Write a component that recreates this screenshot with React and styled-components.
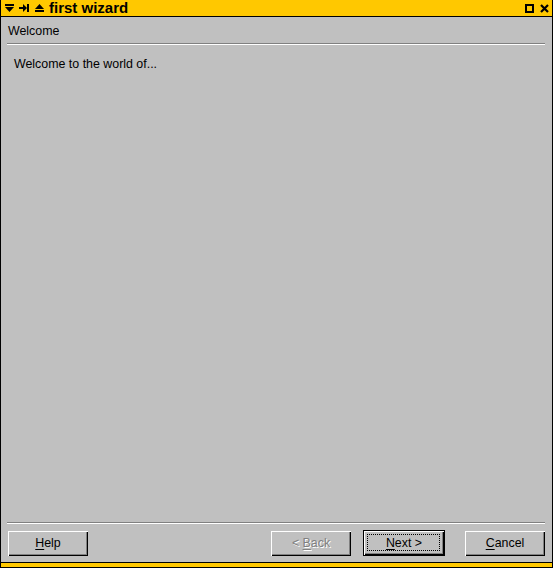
import React from 'react';
import styled, { createGlobalStyle } from 'styled-components';

const GlobalStyle = createGlobalStyle`
    html, body {
        margin: 0;
        padding: 0;
        background: #c0c0c0;
    }
    * {
        box-sizing: border-box;
    }
`;

const Frame = styled.div`
    width: 553px;
    height: 568px;
    display: flex;
    flex-direction: column;
    border-left: 1px solid #000;
    border-right: 1px solid #000;
    font-family: 'Liberation Sans', Arial, sans-serif;
    font-size: 12px;
    color: #000;
`;

const TitleBar = styled.div`
    height: 17px;
    flex-shrink: 0;
    display: flex;
    align-items: center;
    background: #ffc800;
    border-bottom: 1px solid #000;
    padding: 0 3px 0 3px;
`;

const TitleButton = styled.span`
    width: ${p => p.$w || 10}px;
    height: 16px;
    display: flex;
    align-items: center;
    justify-content: center;
    margin-right: ${p => p.$gap || 0}px;
`;

const Title = styled.span`
    font-weight: bold;
    font-size: 15px;
    line-height: 15px;
    margin-left: 5px;
    margin-top: -2px;
    flex: 1;
`;

const Body = styled.div`
    flex: 1;
    display: flex;
    flex-direction: column;
    background: #c0c0c0;
    padding: 0 7px 6px 6px;
`;

const PageTitle = styled.div`
    padding: 7px 0 0 1px;
    line-height: 14px;
    height: 26px;
    font-size: 12.4px;
`;

const Separator = styled.div`
    height: 2px;
    flex-shrink: 0;
    border-top: 1px solid #808080;
    border-bottom: 1px solid #fff;
`;

const Content = styled.div`
    flex: 1;
    padding: 12px 0 0 7px;
    line-height: 14px;
    font-size: 12.4px;
`;

const ButtonRow = styled.div`
    display: flex;
    align-items: center;
    margin-top: 6px;
    height: 26px;
    padding-left: 1px;
`;

const Spacer = styled.div`
    flex: 1;
`;

const Button = styled.button`
    width: 80px;
    height: 25px;
    margin: 0;
    padding: 0;
    font-family: inherit;
    font-size: 12.4px;
    color: ${p => (p.disabled ? '#808080' : '#000')};
    background: #c0c0c0;
    border: none;
    box-shadow: inset 1px 1px 0 #fff, inset -1px -1px 0 #000, inset -2px -2px 0 #808080;
    text-shadow: ${p => (p.disabled ? '1px 1px 0 #fff' : 'none')};
    cursor: default;
    margin-left: ${p => p.$left || 0}px;

    u {
        text-decoration: underline;
        text-underline-offset: 2px;
    }
`;

const DefaultButton = styled(Button)`
    width: 82px;
    height: 26px;
    position: relative;
    border: 1px solid #000;

    &::after {
        content: '';
        position: absolute;
        left: 3px;
        top: 3px;
        right: 4px;
        bottom: 4px;
        border: 1px dotted #000;
    }
`;

const BottomEdge = styled.div`
    height: 6px;
    flex-shrink: 0;
    background: #ffc800;
    border-top: 1px solid #000;
    border-bottom: 1px solid #000;
`;

const ShadeIcon = () => (
    <svg width="9" height="8" viewBox="0 0 9 8">
        <rect x="0" y="0" width="9" height="2" fill="#000" />
        <polygon points="0,3 9,3 4.5,8" fill="#000" />
    </svg>
);

const StickIcon = () => (
    <svg width="10" height="8" viewBox="0 0 10 8">
        <rect x="0" y="3" width="5" height="2" fill="#000" />
        <polygon points="4,0 8,4 4,8" fill="#000" />
        <rect x="8" y="0" width="2" height="8" fill="#000" />
    </svg>
);

const RaiseIcon = () => (
    <svg width="9" height="8" viewBox="0 0 9 8">
        <polygon points="4.5,0 9,5 0,5" fill="#000" />
        <rect x="0" y="6" width="9" height="2" fill="#000" />
    </svg>
);

const MaxIcon = () => (
    <svg width="9" height="9" viewBox="0 0 9 9">
        <rect x="1" y="1" width="7" height="7" fill="none" stroke="#000" strokeWidth="2" />
    </svg>
);

const CloseIcon = () => (
    <svg width="9" height="9" viewBox="0 0 9 9">
        <path d="M1 1 L8 8 M8 1 L1 8" stroke="#000" strokeWidth="2.2" />
    </svg>
);

const App = () => {
    return (
        <>
            <GlobalStyle />
            <Frame>
                <TitleBar>
                    <TitleButton $gap={5}><ShadeIcon /></TitleButton>
                    <TitleButton $gap={5}><StickIcon /></TitleButton>
                    <TitleButton><RaiseIcon /></TitleButton>
                    <Title>first wizard</Title>
                    <TitleButton $gap={5}><MaxIcon /></TitleButton>
                    <TitleButton><CloseIcon /></TitleButton>
                </TitleBar>
                <Body>
                    <PageTitle>Welcome</PageTitle>
                    <Separator />
                    <Content>Welcome to the world of...</Content>
                    <Separator />
                    <ButtonRow>
                        <Button><u>H</u>elp</Button>
                        <Spacer />
                        <Button disabled>&lt; <u>B</u>ack</Button>
                        <DefaultButton $left={12}><u>N</u>ext &gt;</DefaultButton>
                        <Button $left={20}><u>C</u>ancel</Button>
                    </ButtonRow>
                </Body>
                <BottomEdge />
            </Frame>
        </>
    );
};

export default App;
